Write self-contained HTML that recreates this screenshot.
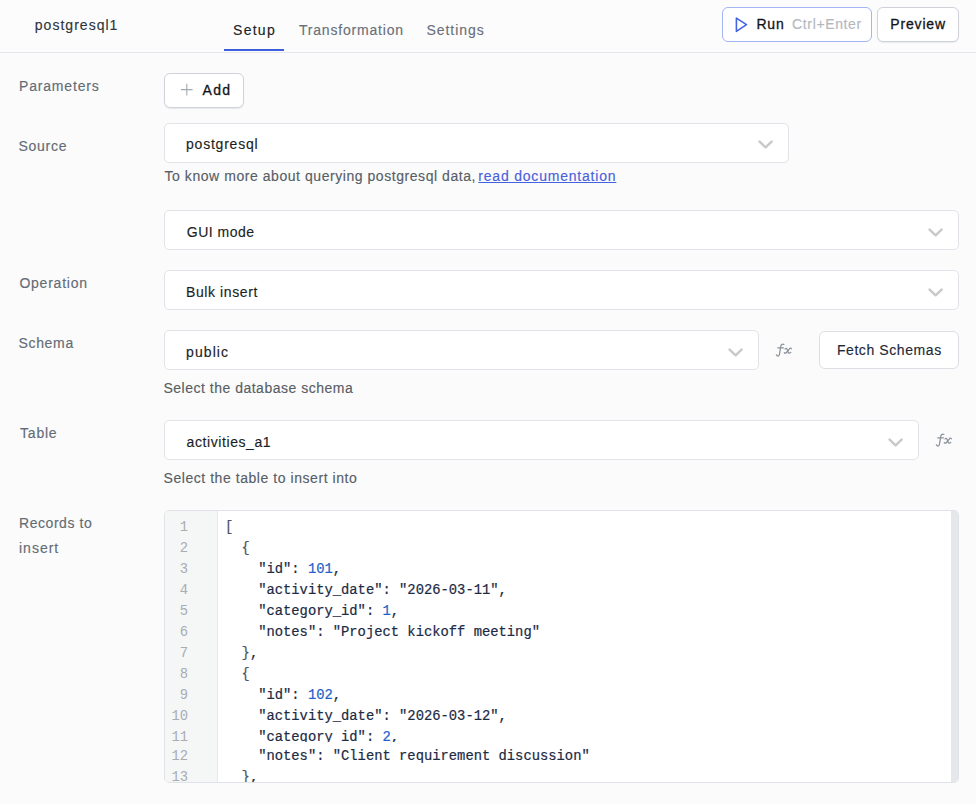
<!DOCTYPE html>
<html><head><meta charset="utf-8">
<style>
*{box-sizing:border-box;margin:0;padding:0}
html,body{width:976px;height:804px;overflow:hidden;background:#fbfbfc;font-family:"Liberation Sans",sans-serif;color:#1b1f24}
.abs{position:absolute}
.t{position:absolute;white-space:pre;font-size:14px;line-height:20px;-webkit-text-stroke-width:0.15px}
.med{-webkit-text-stroke-width:0.3px}
#hdr{position:absolute;left:0;top:0;width:976px;height:53px;background:#fcfcfd;border-bottom:1px solid #e4e6eb}
.sel{position:absolute;background:#fff;border:1px solid #e1e3e8;border-radius:5px}
.btn{position:absolute;background:#fff;border:1px solid #cfd3d9;border-radius:6px;box-shadow:0 1px 1px rgba(16,24,40,0.08)}
#ed{position:absolute;left:164px;top:510px;width:795px;height:273px;background:#fff;border:1px solid #e1e3e8;border-radius:5px;overflow:hidden}
#gut{position:absolute;left:0;top:0;width:53px;height:100%;background:#f5f6f6;border-right:1px solid #e6e8eb}
.ln{position:absolute;left:0;width:23px;text-align:right;font-family:"Liberation Mono",monospace;font-size:13.82px;transform:scaleY(1.06);transform-origin:0 14px;color:#a8adb3;line-height:21px;white-space:pre;background:#f5f6f6}
.cl{position:absolute;left:60px;font-family:"Liberation Mono",monospace;font-size:13.82px;color:#1c2a44;line-height:21px;height:21px;white-space:pre;transform:scaleY(1.06);transform-origin:0 14px;-webkit-text-stroke-width:0.2px}
.n{color:#1f5fc8}
.p{color:#4b5565}
#sb{position:absolute;right:0;top:0;width:7px;height:100%;background:#e5e7eb}
</style></head><body>
<div id="hdr"></div>
<div class="abs" style="left:224px;top:49px;width:60px;height:2px;background:#3e5fdb"></div>
<div class="btn" style="left:722px;top:7px;width:150px;height:35px;border-color:#a3b4f3;box-shadow:none"></div>
<svg class="abs" style="left:733px;top:16px" width="18" height="18" viewBox="0 0 18 18"><path d="M3.4 2.1 L13.5 8.6 L3.4 15.4 Z" fill="none" stroke="#4363e0" stroke-width="1.6" stroke-linejoin="round"/></svg>
<div class="btn" style="left:877px;top:7px;width:82px;height:35px"></div>

<div class="btn" style="left:164px;top:73px;width:80px;height:35px"></div>
<svg class="abs" style="left:180px;top:83px" width="14" height="14" viewBox="0 0 14 14"><path d="M1 6.6 H12.6 M6.8 0.8 V12.4" stroke="#a3a9b0" stroke-width="1.1"/></svg>

<div class="sel" style="left:164px;top:123px;width:625px;height:40px"></div>
<svg class="abs" style="left:756.5px;top:138.5px" width="18" height="12" viewBox="0 0 18 12"><path d="M2.6 2.7 L8.6 8.3 L14.6 2.7" fill="none" stroke="#c9c9c9" stroke-width="2.5" stroke-linecap="round" stroke-linejoin="round"/></svg>
<div class="sel" style="left:164px;top:210px;width:795px;height:40px"></div>
<svg class="abs" style="left:926.5px;top:226.5px" width="18" height="12" viewBox="0 0 18 12"><path d="M2.6 2.7 L8.6 8.3 L14.6 2.7" fill="none" stroke="#c9c9c9" stroke-width="2.5" stroke-linecap="round" stroke-linejoin="round"/></svg>
<div class="sel" style="left:164px;top:270px;width:795px;height:40px"></div>
<svg class="abs" style="left:926.5px;top:286.5px" width="18" height="12" viewBox="0 0 18 12"><path d="M2.6 2.7 L8.6 8.3 L14.6 2.7" fill="none" stroke="#c9c9c9" stroke-width="2.5" stroke-linecap="round" stroke-linejoin="round"/></svg>
<div class="sel" style="left:164px;top:330px;width:595px;height:40px"></div>
<svg class="abs" style="left:726.5px;top:346.5px" width="18" height="12" viewBox="0 0 18 12"><path d="M2.6 2.7 L8.6 8.3 L14.6 2.7" fill="none" stroke="#c9c9c9" stroke-width="2.5" stroke-linecap="round" stroke-linejoin="round"/></svg>
<svg class="abs" style="left:772px;top:340px" width="24" height="20" viewBox="0 0 24 20"><g fill="none" stroke="#8c929a" stroke-width="1.25" stroke-linecap="round"><path d="M11.9 4.5 C11 3.9 9.2 4 8.8 6.2 L7.5 14.2 C7.1 16.4 5.4 16.6 4.4 14.9"/><path d="M5.7 7.8 H11.4"/><path d="M13 9 C13.6 8.1 14.6 8 15 9.1 L16.1 12.2 C16.5 13.3 17.8 13.5 18.8 12.4"/><path d="M19.3 8.8 C19 8 18 8 17.2 9.1 L14.5 12.5 C13.7 13.4 12.7 13.3 12.3 12.6"/></g></svg>
<div class="btn" style="left:819px;top:331px;width:140px;height:38px;border-color:#dcdfe4;box-shadow:none"></div>
<div class="sel" style="left:164px;top:420px;width:755px;height:40px"></div>
<svg class="abs" style="left:886.5px;top:436.5px" width="18" height="12" viewBox="0 0 18 12"><path d="M2.6 2.7 L8.6 8.3 L14.6 2.7" fill="none" stroke="#c9c9c9" stroke-width="2.5" stroke-linecap="round" stroke-linejoin="round"/></svg>
<svg class="abs" style="left:932px;top:430px" width="24" height="20" viewBox="0 0 24 20"><g fill="none" stroke="#8c929a" stroke-width="1.25" stroke-linecap="round"><path d="M11.9 4.5 C11 3.9 9.2 4 8.8 6.2 L7.5 14.2 C7.1 16.4 5.4 16.6 4.4 14.9"/><path d="M5.7 7.8 H11.4"/><path d="M13 9 C13.6 8.1 14.6 8 15 9.1 L16.1 12.2 C16.5 13.3 17.8 13.5 18.8 12.4"/><path d="M19.3 8.8 C19 8 18 8 17.2 9.1 L14.5 12.5 C13.7 13.4 12.7 13.3 12.3 12.6"/></g></svg>

<div id="ed">
<div id="gut"></div>
<div class="cl" style="top:6px"><span class="p">[</span></div>
<div class="ln" style="top:6px">1</div>
<div class="cl" style="top:27px">  <span class="p">{</span></div>
<div class="ln" style="top:27px">2</div>
<div class="cl" style="top:48px">    "id": <span class="n">101</span>,</div>
<div class="ln" style="top:48px">3</div>
<div class="cl" style="top:69px">    "activity_date": "2026-03-11",</div>
<div class="ln" style="top:69px">4</div>
<div class="cl" style="top:90px">    "category_id": <span class="n">1</span>,</div>
<div class="ln" style="top:90px">5</div>
<div class="cl" style="top:111px">    "notes": "Project kickoff meeting"</div>
<div class="ln" style="top:111px">6</div>
<div class="cl" style="top:132px">  <span class="p">}</span>,</div>
<div class="ln" style="top:132px">7</div>
<div class="cl" style="top:153px">  <span class="p">{</span></div>
<div class="ln" style="top:153px">8</div>
<div class="cl" style="top:174px">    "id": <span class="n">102</span>,</div>
<div class="ln" style="top:174px">9</div>
<div class="cl" style="top:195px">    "activity_date": "2026-03-12",</div>
<div class="ln" style="top:195px">10</div>
<div class="cl" style="top:216px">    "category_id": <span class="n">2</span>,</div>
<div class="ln" style="top:216px">11</div>
<div class="abs" style="left:53px;right:7px;top:231px;bottom:0;background:#fff"></div>
<div class="cl" style="top:235px">    "notes": "Client requirement discussion"</div>
<div class="ln" style="top:235px">12</div>
<div class="cl" style="top:256px">  <span class="p">}</span>,</div>
<div class="ln" style="top:256px">13</div>
<div id="sb"></div>
</div>

<div class="t" style="left:34.80px;top:15px;letter-spacing:1.020px;color:#2f343a;">postgresql1</div>
<div class="t" style="left:233.10px;top:20px;letter-spacing:1.250px;color:#1b1f24;">Setup</div>
<div class="t" style="left:298.90px;top:20px;letter-spacing:0.815px;color:#6a7079;">Transformation</div>
<div class="t" style="left:426.50px;top:20px;letter-spacing:0.943px;color:#6a7079;">Settings</div>
<div class="t med" style="left:756.40px;top:14px;letter-spacing:0.850px;color:#111418;">Run</div>
<div class="t" style="left:792.10px;top:14px;letter-spacing:0.633px;color:#b3b8be;">Ctrl+Enter</div>
<div class="t med" style="left:890.30px;top:14px;letter-spacing:0.833px;color:#111418;">Preview</div>
<div class="t" style="left:19.00px;top:76px;letter-spacing:0.822px;color:#646b74;">Parameters</div>
<div class="t med" style="left:202.60px;top:80px;letter-spacing:1.300px;color:#111418;">Add</div>
<div class="t" style="left:18.40px;top:136px;letter-spacing:0.760px;color:#646b74;">Source</div>
<div class="t" style="left:186.00px;top:134px;letter-spacing:0.778px;color:#1b1f24;">postgresql</div>
<div class="t" style="left:186.80px;top:222px;letter-spacing:0.500px;color:#1b1f24;">GUI mode</div>
<div class="t" style="left:19.40px;top:273px;letter-spacing:0.775px;color:#646b74;">Operation</div>
<div class="t" style="left:186.00px;top:282px;letter-spacing:0.600px;color:#1b1f24;">Bulk insert</div>
<div class="t" style="left:18.40px;top:333px;letter-spacing:0.700px;color:#646b74;">Schema</div>
<div class="t" style="left:186.10px;top:342px;letter-spacing:1.060px;color:#1b1f24;">public</div>
<div class="t" style="left:836.90px;top:340px;letter-spacing:0.583px;color:#1e2937;">Fetch Schemas</div>
<div class="t" style="left:163.50px;top:378px;letter-spacing:0.500px;color:#575e66;">Select the database schema</div>
<div class="t" style="left:20.10px;top:423px;letter-spacing:0.750px;color:#646b74;">Table</div>
<div class="t" style="left:186.60px;top:432px;letter-spacing:0.583px;color:#1b1f24;">activities_a1</div>
<div class="t" style="left:163.50px;top:468px;letter-spacing:0.553px;color:#575e66;">Select the table to insert into</div>
<div class="t" style="left:19.00px;top:513px;letter-spacing:0.556px;color:#646b74;">Records to</div>
<div class="t" style="left:19.00px;top:538px;letter-spacing:1.000px;color:#646b74;">insert</div>
<div class="t" style="left:164.5px;top:166px;letter-spacing:0.553px;color:#575e66">To know more about querying postgresql data,</div><div class="t" style="left:478.3px;top:166px;letter-spacing:0.794px;color:#4a60da;text-decoration:underline;text-decoration-thickness:1px;text-decoration-color:#4262e2">read documentation</div>
</body></html>
